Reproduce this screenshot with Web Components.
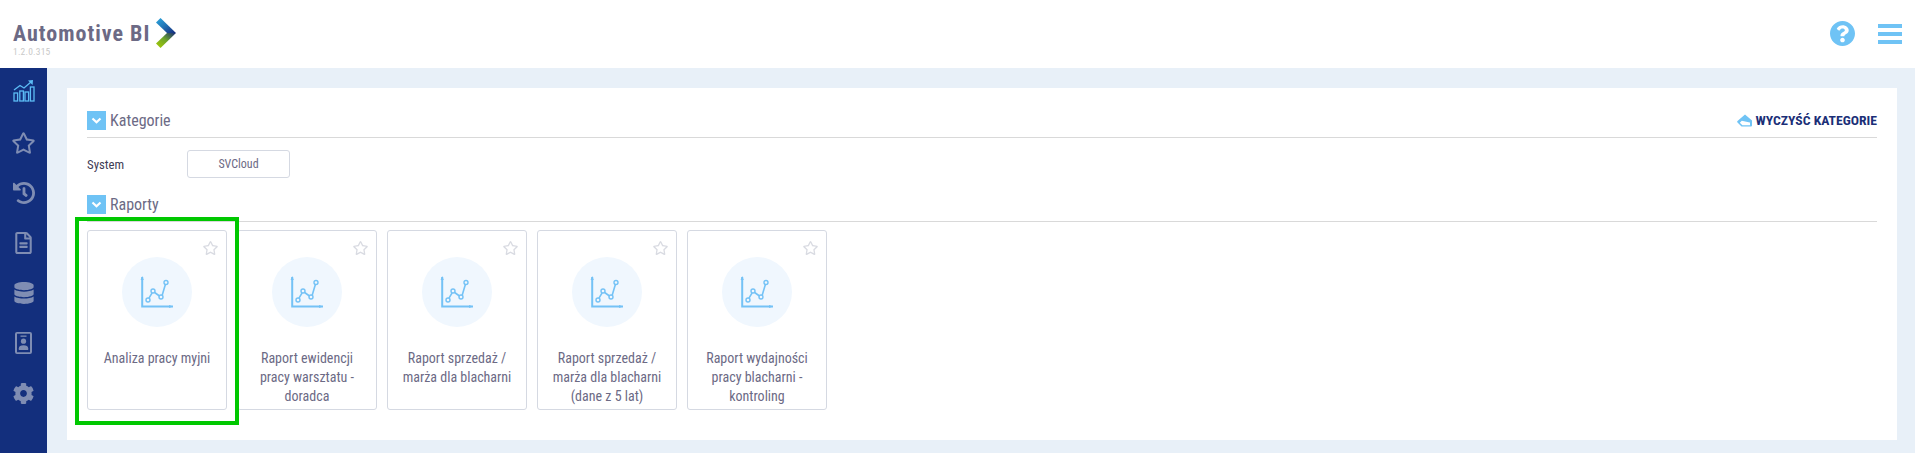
<!DOCTYPE html>
<html lang="pl">
<head>
<meta charset="utf-8">
<title>Automotive BI</title>
<style>
  html, body { margin: 0; height: 100%; }
  body { background: #e8f0f8; font-family: "Roboto Condensed", Roboto, "Liberation Sans", sans-serif; font-stretch: 75%; color: #6c6a85; overflow: hidden; }
  .layout { display: flex; height: 385px; }
  .main { flex: 1; padding: 20px 18px 13px 20px; min-width: 0; }
</style>
</head>
<body>
<app-header></app-header>
<div class="layout">
  <app-sidebar></app-sidebar>
  <div class="main">
    <app-panel>
      <section-title label="Kategorie">
        <clear-button slot="action">WYCZYŚĆ KATEGORIE</clear-button>
      </section-title>
      <filter-row label="System">SVCloud</filter-row>
      <section-title label="Raporty"></section-title>
      <report-list>
        <report-card highlighted>Analiza pracy myjni</report-card>
        <report-card>Raport ewidencji pracy warsztatu - doradca</report-card>
        <report-card>Raport sprzedaż / marża dla blacharni</report-card>
        <report-card>Raport sprzedaż / marża dla blacharni (dane z 5 lat)</report-card>
        <report-card>Raport wydajności pracy blacharni - kontroling</report-card>
      </report-list>
    </app-panel>
  </div>
</div>

<script>
const STAR = 'M528.1 171.5L382 150.2 316.7 17.8c-11.7-23.6-45.6-23.9-57.4 0L194 150.2 47.9 171.5c-26.2 3.8-36.7 36.1-17.7 54.6l105.7 103-25 145.5c-4.5 26.3 23.2 46 46.4 33.7L288 439.6l130.7 68.7c23.2 12.2 50.9-7.4 46.4-33.7l-25-145.5 105.7-103c19-18.5 8.5-50.8-17.7-54.6zM388.6 312.3l23.7 138.4L288 385.4l-124.3 65.3 23.7-138.4-100.6-98 139-20.2 62.2-126 62.2 126 139 20.2-100.6 98z';

class AppHeader extends HTMLElement {
  constructor() {
    super();
    this.attachShadow({ mode: 'open' });
    this.shadowRoot.innerHTML = `
      <style>
        :host { display: flex; align-items: flex-start; justify-content: space-between; height: 68px; background: #fff; }
        .brand { padding: 18px 0 0 13px; display: flex; align-items: flex-start; }
        .name { font-size: 22px; font-weight: 700; letter-spacing: 1px; line-height: 26px; margin-top: 3px; color: #6c6a85; white-space: nowrap; }
        .version { font-size: 9.5px; line-height: 10px; color: #c9c9c9; font-stretch: 100%; letter-spacing: .2px; margin-top: 0; }
        .logo { margin-left: 6px; display: block; }
        .tools { display: flex; align-items: center; gap: 23px; padding: 21px 13px 0 0; }
        svg { display: block; }
        .burger { display: flex; flex-direction: column; gap: 4px; width: 24px; }
        .burger i { display: block; height: 4px; background: #6fc3f5; }
      </style>
      <div class="brand">
        <div>
          <div class="name">Automotive BI</div>
          <div class="version">1.2.0.315</div>
        </div>
        <svg class="logo" width="21" height="30" viewBox="0 0 21 30">
          <defs>
            <linearGradient id="up" x1="0" y1="0" x2="1" y2="1">
              <stop offset="0" stop-color="#2ba6de"/><stop offset=".45" stop-color="#2478b8"/><stop offset="1" stop-color="#14287a"/>
            </linearGradient>
            <linearGradient id="down" x1="0" y1="1" x2="1" y2="0">
              <stop offset="0" stop-color="#a8cc00"/><stop offset=".5" stop-color="#6fa62a"/><stop offset="1" stop-color="#14287a"/>
            </linearGradient>
          </defs>
          <path fill="url(#up)" d="M0 4.5 4.500 0 20 15 11 15z"/>
          <path fill="url(#down)" d="M0 25.500 11 15 20 15 4.500 30z"/>
        </svg>
      </div>
      <div class="tools">
        <svg width="25" height="25" viewBox="8 8 496 496" fill="#6fc3f5"><path d="M504 256c0 136.997-111.043 248-248 248S8 392.997 8 256C8 119.083 119.043 8 256 8s248 111.083 248 248zM262.655 90c-54.497 0-89.255 22.957-116.549 63.758-3.536 5.286-2.353 12.415 2.715 16.258l34.699 26.31c5.205 3.947 12.621 3.008 16.665-2.122 17.864-22.658 30.113-35.797 57.303-35.797 20.429 0 45.698 13.148 45.698 32.958 0 14.976-12.363 22.667-32.534 33.976C247.128 238.528 216 254.941 216 296v4c0 6.627 5.373 12 12 12h56c6.627 0 12-5.373 12-12v-1.333c0-28.462 83.186-29.647 83.186-106.667 0-58.002-60.165-102-116.531-102zM256 338c-25.365 0-46 20.635-46 46 0 25.364 20.635 46 46 46s46-20.636 46-46c0-25.365-20.635-46-46-46z"/></svg>
        <div class="burger"><i></i><i></i><i></i></div>
      </div>
    `;
  }
}

class AppSidebar extends HTMLElement {
  constructor() {
    super();
    this.attachShadow({ mode: 'open' });
    this.shadowRoot.innerHTML = `
      <style>
        :host { display: flex; flex-direction: column; align-items: center; width: 47px; flex: none; background: #132f7d; box-sizing: border-box; }
        .item { height: 50px; width: 100%; display: flex; align-items: center; justify-content: center; color: #7f8db3; }
        .item.active { color: #5cbcf5; }
        .item.active svg { margin-bottom: 5px; }
        svg { display: block; fill: currentColor; }
      </style>
      <div class="item active">
        <svg width="22" height="22" viewBox="0 0 22 22" style="fill:none;stroke:currentColor;stroke-width:1.3">
          <rect x="1" y="13" width="3.600" height="8"/><rect x="6.800" y="11" width="3.600" height="10"/><rect x="12" y="12" width="3.600" height="9"/><rect x="17.400" y="7" width="3.600" height="14"/>
          <path d="M1 10 7 5.500 11 8 18 2"/><path fill="currentColor" stroke="none" d="M15 .6 20 0 19.600 5z"/>
        </svg>
      </div>
      <div class="item"><svg width="23" height="22" viewBox="14 0 548 512"><path d="${STAR}"/></svg></div>
      <div class="item"><svg width="22" height="22" viewBox="8 8 496 496"><path d="M504 255.531c.253 136.64-111.18 248.372-247.82 248.468-59.015.042-113.223-20.53-155.822-54.911-11.077-8.94-11.905-25.541-1.839-35.607l11.267-11.267c8.609-8.609 22.353-9.551 31.891-1.984C173.062 425.135 212.781 440 256 440c101.705 0 184-82.311 184-184 0-101.705-82.311-184-184-184-48.814 0-93.149 18.969-126.068 49.932l50.754 50.754c10.08 10.08 2.941 27.314-11.313 27.314H24c-8.837 0-16-7.163-16-16V38.627c0-14.254 17.234-21.393 27.314-11.314l49.372 49.372C129.209 34.136 189.552 8 256 8c136.81 0 247.747 110.78 248 247.531zm-180.912 78.784l9.823-12.63c8.138-10.463 6.253-25.542-4.21-33.679L288 256.349V152c0-13.255-10.745-24-24-24h-16c-13.255 0-24 10.745-24 24v135.651l65.409 50.874c10.463 8.137 25.541 6.253 33.679-4.21z"/></svg></div>
      <div class="item"><svg width="17" height="22" viewBox="0 0 384 512"><path d="M288 248v28c0 6.600-5.400 12-12 12H108c-6.600 0-12-5.400-12-12v-28c0-6.600 5.400-12 12-12h168c6.600 0 12 5.400 12 12zm-12 72H108c-6.600 0-12 5.400-12 12v28c0 6.600 5.400 12 12 12h168c6.600 0 12-5.400 12-12v-28c0-6.600-5.400-12-12-12zm108-188.100V464c0 26.500-21.500 48-48 48H48c-26.500 0-48-21.500-48-48V48C0 21.500 21.500 0 48 0h204.100C264.800 0 277 5.100 286 14.100L369.900 98c9 8.900 14.100 21.200 14.100 33.900zm-128-80V128h76.100L256 51.900zM336 464V176H232c-13.300 0-24-10.700-24-24V48H48v416h288z"/></svg></div>
      <div class="item"><svg width="20" height="22" viewBox="0 0 448 512"><path d="M448 73.143v45.714C448 159.143 347.667 192 224 192S0 159.143 0 118.857V73.143C0 32.857 100.333 0 224 0s224 32.857 224 73.143zM448 176v102.857C448 319.143 347.667 352 224 352S0 319.143 0 278.857V176c48.125 33.143 136.208 48.572 224 48.572S399.874 209.143 448 176zm0 160v102.857C448 479.143 347.667 512 224 512S0 479.143 0 438.857V336c48.125 33.143 136.208 48.572 224 48.572S399.874 369.143 448 336z"/></svg></div>
      <div class="item"><svg width="17" height="22" viewBox="0 0 17 22"><path fill-rule="evenodd" d="M2 0h13a2 2 0 0 1 2 2v18a2 2 0 0 1-2 2H2a2 2 0 0 1-2-2V2a2 2 0 0 1 2-2zm0 1.800V20.200h13V1.800z"/><rect x="5.500" y="3.500" width="6" height="1.300"/><circle cx="8.500" cy="9.200" r="2.600"/><path d="M3.800 18v-1.800c0-2 1.800-3 4.700-3s4.700 1 4.700 3V18z"/></svg></div>
      <div class="item"><svg width="21" height="21" viewBox="17 8 478 496"><path d="M487.400 315.700l-42.600-24.600c4.300-23.200 4.300-47 0-70.200l42.600-24.600c4.900-2.800 7.100-8.600 5.500-14-11.100-35.600-30-67.800-54.700-94.600-3.800-4.100-10-5.100-14.800-2.300L380.800 110c-17.900-15.400-38.500-27.300-60.800-35.100V25.800c0-5.600-3.900-10.500-9.400-11.700-36.700-8.200-74.300-7.800-109.200 0-5.500 1.200-9.400 6.100-9.400 11.700V75c-22.200 7.900-42.800 19.800-60.800 35.100L88.700 85.500c-4.900-2.800-11-1.900-14.800 2.300-24.700 26.700-43.600 58.900-54.700 94.600-1.700 5.400.6 11.200 5.500 14L67.300 221c-4.300 23.200-4.300 47 0 70.200l-42.600 24.600c-4.900 2.800-7.100 8.600-5.500 14 11.100 35.600 30 67.800 54.700 94.600 3.800 4.100 10 5.100 14.800 2.300l42.600-24.600c17.900 15.400 38.500 27.300 60.800 35.100v49.200c0 5.600 3.900 10.500 9.400 11.700 36.700 8.200 74.300 7.800 109.200 0 5.500-1.200 9.400-6.100 9.400-11.700v-49.200c22.200-7.900 42.800-19.800 60.800-35.100l42.600 24.600c4.900 2.800 11 1.900 14.800-2.300 24.700-26.700 43.600-58.900 54.700-94.600 1.500-5.500-.7-11.300-5.600-14.100zM256 336c-44.100 0-80-35.900-80-80s35.900-80 80-80 80 35.900 80 80-35.900 80-80 80z"/></svg></div>
    `;
  }
}

class AppPanel extends HTMLElement {
  constructor() {
    super();
    this.attachShadow({ mode: 'open' });
    this.shadowRoot.innerHTML = `
      <style>
        :host { display: block; height: 352px; box-sizing: border-box; background: #fff; padding: 23px 20px 0; }
      </style>
      <slot></slot>
    `;
  }
}

class SectionTitle extends HTMLElement {
  constructor() {
    super();
    this.attachShadow({ mode: 'open' });
    this.shadowRoot.innerHTML = `
      <style>
        :host { display: flex; align-items: flex-start; height: 27px; box-sizing: border-box; border-bottom: 1px solid #d9d9d9; }
        .toggle { width: 19px; height: 19px; background: #6fc3f5; display: flex; align-items: center; justify-content: center; flex: none; }
        .label { margin-left: 4px; font-size: 16px; line-height: 19px; color: #6c6a85; }
        .action { margin-left: auto; }
      </style>
      <span class="toggle"><svg width="11" height="7" viewBox="0 0 11 7"><path d="M1.500 1.500 5.500 5.200 9.500 1.500" fill="none" stroke="#fff" stroke-width="2.200"/></svg></span>
      <span class="label"></span>
      <span class="action"><slot name="action"></slot></span>
    `;
  }
  connectedCallback() {
    this.shadowRoot.querySelector('.label').textContent = this.getAttribute('label');
  }
}

class ClearButton extends HTMLElement {
  constructor() {
    super();
    this.attachShadow({ mode: 'open' });
    this.shadowRoot.innerHTML = `
      <style>
        :host { display: flex; align-items: center; gap: 3px; font-size: 13.700px; font-weight: 700; color: #1b2f77; line-height: 19px; }
        svg { display: block; }
      </style>
      <svg width="15" height="13" viewBox="0 0 15 13"><path fill="#6fc3f5" fill-rule="evenodd" d="M8 .5 15 6.500V11.500a1 1 0 0 1-1 1H4.500L.5 8.500a1 1 0 0 1 0-1.400zM4.800 6.800 2.800 8.700 5.400 11.200H13V8.600L12.800 8.400z"/></svg>
      <span><slot></slot></span>
    `;
  }
}

class FilterRow extends HTMLElement {
  constructor() {
    super();
    this.attachShadow({ mode: 'open' });
    this.shadowRoot.innerHTML = `
      <style>
        :host { display: flex; align-items: center; height: 28px; margin: 12px 0 17px; }
        .label { width: 100px; font-size: 12.800px; color: #3f3d56; }
        .chip { width: 103px; height: 28px; box-sizing: border-box; border: 1px solid #d5d9e2; border-radius: 3px; display: flex; align-items: center; justify-content: center; font-size: 12px; color: #6c6a85; }
      </style>
      <span class="label"></span>
      <span class="chip"><slot></slot></span>
    `;
  }
  connectedCallback() {
    this.shadowRoot.querySelector('.label').textContent = this.getAttribute('label');
  }
}

class ReportList extends HTMLElement {
  constructor() {
    super();
    this.attachShadow({ mode: 'open' });
    this.shadowRoot.innerHTML = `
      <style>
        :host { display: flex; gap: 10px; margin-top: 8px; }
      </style>
      <slot></slot>
    `;
  }
}

class ReportCard extends HTMLElement {
  constructor() {
    super();
    this.attachShadow({ mode: 'open' });
    this.shadowRoot.innerHTML = `
      <style>
        :host { display: flex; flex-direction: column; align-items: center; position: relative; width: 140px; height: 180px; box-sizing: border-box; border: 1px solid #d5d9e2; border-radius: 3px; background: #fff; padding-top: 26px; }
        :host([highlighted])::after { content: ""; position: absolute; top: -14px; left: -13px; right: -13px; bottom: -16px; border: 4px solid #00c800; z-index: 2; }
        .fav { position: absolute; top: 10px; right: 8px; display: block; fill: #d9dbe2; }
        .circle { width: 70px; height: 70px; border-radius: 50%; background: #f0f7fe; display: flex; align-items: center; justify-content: center; flex: none; }
        .circle svg { display: block; overflow: visible; }
        .text { margin-top: 22px; padding: 0 10px; font-size: 14px; line-height: 19px; text-align: center; color: #6c6a85; }
      </style>
      <svg class="fav" width="15" height="14" viewBox="14 0 548 512"><path d="${STAR}"/></svg>
      <div class="circle">
        <svg width="32" height="32" viewBox="0 0 32 32" fill="none" stroke="#74c2f6">
          <path d="M1.200 1V30.500H32" stroke-width="2"/>
          <path d="M-.400 4 1.200 0 2.800 4zM28 28.900 32 30.500 28 32.100z" fill="#74c2f6" stroke="none"/>
          <path d="M8 22.200 11.100 16.800M13.600 16.500 18.500 20M21.200 19.300 24.500 8" stroke-width="1.600"/>
          <circle cx="7" cy="24" r="2" stroke-width="1.400"/>
          <circle cx="12" cy="15" r="2" stroke-width="1.400"/>
          <circle cx="20" cy="21" r="2" stroke-width="1.400"/>
          <circle cx="25" cy="6.500" r="2" stroke-width="1.400"/>
        </svg>
      </div>
      <div class="text"><slot></slot></div>
    `;
  }
}

customElements.define('app-header', AppHeader);
customElements.define('app-sidebar', AppSidebar);
customElements.define('app-panel', AppPanel);
customElements.define('section-title', SectionTitle);
customElements.define('clear-button', ClearButton);
customElements.define('filter-row', FilterRow);
customElements.define('report-list', ReportList);
customElements.define('report-card', ReportCard);
</script>
</body>
</html>
